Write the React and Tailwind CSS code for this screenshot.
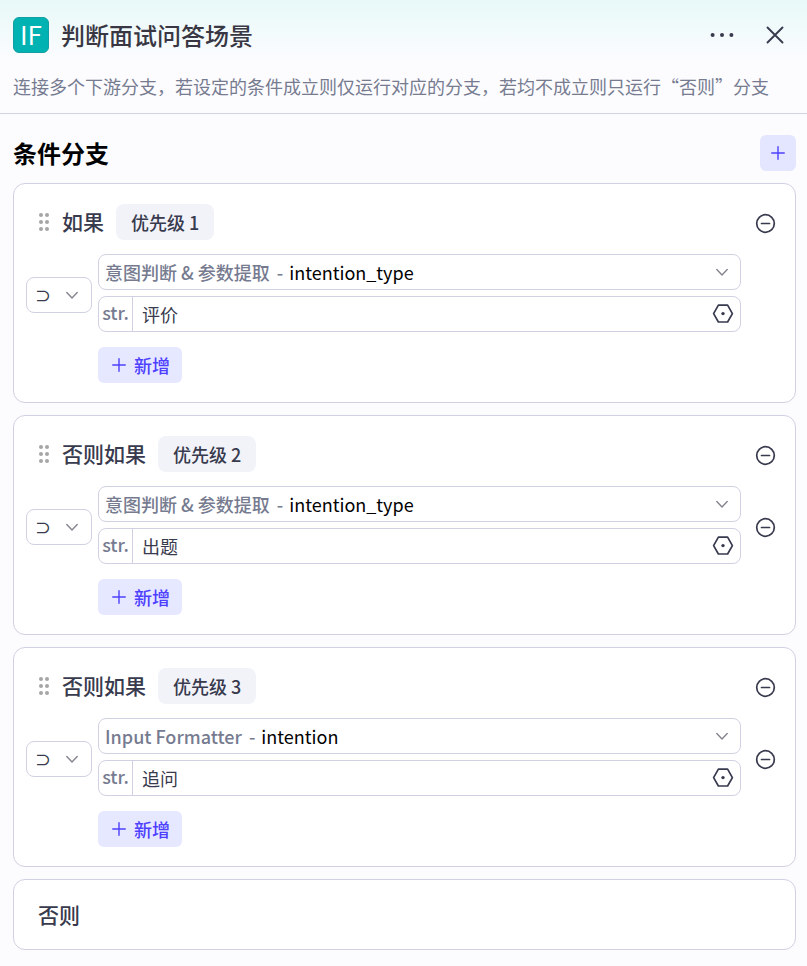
import { useState } from 'react';

const VARIABLES = {
  intent: { node: '意图判断 & 参数提取', name: 'intention_type' },
  formatter: { node: 'Input Formatter', name: 'intention' }
};

const INITIAL_BRANCHES = [
  { id: 1, title: '如果', variable: 'intent', value: '评价', removable: false },
  { id: 2, title: '否则如果', variable: 'intent', value: '出题', removable: true },
  { id: 3, title: '否则如果', variable: 'formatter', value: '追问', removable: true }
];

const PlusIcon = ({ className }) => (
  <svg className={className} viewBox="0 0 14 14" fill="none" stroke="currentColor" strokeWidth="1.4" strokeLinecap="round">
    <path d="M7 .75v12.5M.75 7h12.5" />
  </svg>
);

const ChevronIcon = () => (
  <svg className="pointer-events-none h-2 w-3 shrink-0 text-[#85858f]" viewBox="0 0 12 8" fill="none" stroke="currentColor" strokeWidth="1.4" strokeLinecap="round" strokeLinejoin="round">
    <path d="M.8 1.6 6 7l5.2-5.4" />
  </svg>
);

const DragIcon = () => (
  <svg className="h-[18px] w-[10px] shrink-0 text-[#a6a6a6]" viewBox="0 0 10 18" fill="currentColor">
    <circle cx="2" cy="2" r="2" />
    <circle cx="8" cy="2" r="2" />
    <circle cx="2" cy="9" r="2" />
    <circle cx="8" cy="9" r="2" />
    <circle cx="2" cy="16" r="2" />
    <circle cx="8" cy="16" r="2" />
  </svg>
);

const RemoveButton = ({ label, onClick }) => (
  <button type="button" aria-label={label} onClick={onClick} className="shrink-0 cursor-pointer text-[#383a4d]">
    <svg className="block h-[21px] w-[21px]" viewBox="0 0 21 21" fill="none" stroke="currentColor" strokeWidth="1.7" strokeLinecap="round">
      <circle cx="10.5" cy="10.5" r="8.8" />
      <path d="M6.5 10.5h8" />
    </svg>
  </button>
);

const ConditionRow = ({ branch, onChange, onRemove }) => {
  const variable = VARIABLES[branch.variable];

  return (
    <div className="flex items-center">
      {/* Operator */}
      <div className="relative mr-[6px] h-9 w-[66px] shrink-0 rounded-lg border border-[#d0d1e2] bg-white">
        <select
          aria-label="运算符"
          className="h-full w-full cursor-pointer appearance-none rounded-lg bg-transparent pl-2 text-[16px] font-medium text-[#383a4d] outline-none"
        >
          <option>⊃</option>
        </select>
        <span className="pointer-events-none absolute inset-y-0 right-[13px] flex items-center">
          <ChevronIcon />
        </span>
      </div>

      <div className="flex min-w-0 flex-1 flex-col gap-[6px] pb-1">
        {/* Variable reference */}
        <div className="flex h-9 items-center rounded-lg border border-[#d0d1e2] bg-white pl-[6px] pr-3 text-[18px]">
          <label
            htmlFor={`variable-${branch.id}`}
            className="flex shrink-0 gap-[7px] font-medium text-[#767b90]"
          >
            {variable.node}
            <span>-</span>
          </label>
          <select
            id={`variable-${branch.id}`}
            className="h-full min-w-0 flex-1 cursor-pointer appearance-none bg-transparent pl-[6px] text-black outline-none"
          >
            <option>{variable.name}</option>
          </select>
          <ChevronIcon />
        </div>

        {/* Compared value */}
        <div className="flex h-9 items-center rounded-lg border border-[#d0d1e2] bg-white pr-[6px]">
          <label
            htmlFor={`value-${branch.id}`}
            className="flex h-full w-[34px] shrink-0 items-center justify-center border-r border-[#d0d1e2] pb-1 text-[18px] leading-none font-medium text-[#767b90]"
          >
            str.
          </label>
          <input
            id={`value-${branch.id}`}
            type="text"
            value={branch.value}
            onChange={(e) => onChange(branch.id, e.target.value)}
            className="h-full min-w-0 flex-1 bg-transparent px-[9px] text-[18px] text-[#383a4d] outline-none"
          />
          <button type="button" aria-label="选择变量" className="shrink-0 cursor-pointer text-[#383a4d]">
            <svg className="block h-5 w-[22px]" viewBox="0 0 22 20" fill="none" stroke="currentColor" strokeWidth="1.7" strokeLinejoin="round">
              <path d="M6.4 1.2h9.2l4.8 8.4-4.8 8.4H6.4L1.6 9.6z" />
              <circle cx="11" cy="9.6" r="1.7" fill="currentColor" stroke="none" />
            </svg>
          </button>
        </div>
      </div>

      <div className="ml-[14px] flex w-[21px] shrink-0 justify-center">
        {branch.removable && <RemoveButton label="删除条件" onClick={() => onRemove(branch.id)} />}
      </div>
    </div>
  );
};

const BranchCard = ({ branch, priority, onChange, onRemove }) => (
  <section className="rounded-xl border border-[#d0d1e2] bg-white pt-5 pr-[19px] pb-[19px] pl-3">
    <div className="mb-[14px] flex h-9 items-center pl-[13px]">
      <DragIcon />
      <h3 className="ml-[13px] text-[21px] font-medium text-[#383a4d]">{branch.title}</h3>
      <span className="ml-3 flex h-9 items-center rounded-lg bg-[#f2f3f9] px-[15px] text-[18px] font-medium text-[#383a4d]">
        优先级 {priority}
      </span>
      <div className="ml-auto flex pt-[3px]">
        <RemoveButton label="删除分支" onClick={() => onRemove(branch.id)} />
      </div>
    </div>

    <ConditionRow branch={branch} onChange={onChange} onRemove={onRemove} />

    <button
      type="button"
      className="mt-[11px] ml-[72px] flex h-9 cursor-pointer items-center gap-2 rounded-md bg-[#e6e8ff] pr-3 pl-[14px] text-[18px] font-medium text-[#4d40ff]"
    >
      <PlusIcon className="h-[14px] w-[14px]" />
      新增
    </button>
  </section>
);

export default function App() {
  const [branches, setBranches] = useState(INITIAL_BRANCHES);

  const handleChange = (id, value) => {
    setBranches(branches.map((b) => (b.id === id ? { ...b, value } : b)));
  };

  const handleRemove = (id) => {
    setBranches(branches.filter((b) => b.id !== id));
  };

  const handleAdd = () => {
    setBranches([
      ...branches,
      { id: Date.now(), title: '否则如果', variable: 'intent', value: '', removable: true }
    ]);
  };

  return (
    <div className="min-h-screen bg-[#fcfcff] font-['Noto_Sans_CJK_SC',sans-serif]">
      <header className="border-b border-[#d0d1e2] bg-linear-to-b from-[#e8f9f8] to-[#fcfcff] to-[62px] pt-[17px] pr-[11px] pb-[15px] pl-[13px]">
        <div className="flex h-9 items-center">
          <div className="flex h-9 w-9 shrink-0 items-center justify-center rounded-md border border-[#129fa3] bg-[#00b2b2] pb-[2px] text-[26px] leading-none text-white">
            IF
          </div>
          <h1 className="ml-3 text-[24px] leading-9 font-medium text-[#383743]">判断面试问答场景</h1>
          <button type="button" aria-label="更多" className="ml-auto cursor-pointer text-[#383a4d]">
            <svg className="block h-6 w-6" viewBox="0 0 24 24" fill="currentColor">
              <circle cx="2.6" cy="12" r="2" />
              <circle cx="12" cy="12" r="2" />
              <circle cx="21.4" cy="12" r="2" />
            </svg>
          </button>
          <button type="button" aria-label="关闭" className="mr-[12px] ml-[32px] cursor-pointer text-[#383a4d]">
            <svg className="block h-[18px] w-[18px]" viewBox="0 0 18 18" fill="none" stroke="currentColor" strokeWidth="1.9" strokeLinecap="round">
              <path d="M1.5 1.5l15 15M16.5 1.5l-15 15" />
            </svg>
          </button>
        </div>
        <p className="mt-[21px] text-[18px] leading-6 text-[#767b90]">
          连接多个下游分支，若设定的条件成立则仅运行对应的分支，若均不成立则只运行“否则”分支
        </p>
      </header>

      <main className="pt-[21px] pr-[11px] pb-4 pl-[13px]">
        <div className="mb-3 flex h-9 items-center justify-between">
          <h2 className="text-[24px] leading-[34px] font-semibold text-black">条件分支</h2>
          <button
            type="button"
            aria-label="添加分支"
            onClick={handleAdd}
            className="flex h-9 w-9 cursor-pointer items-center justify-center rounded-md bg-[#e4e6ff] text-[#4d40ff]"
          >
            <PlusIcon className="h-[14px] w-[14px]" />
          </button>
        </div>

        <div className="flex flex-col gap-3">
          {branches.map((branch, i) => (
            <BranchCard
              key={branch.id}
              branch={branch}
              priority={i + 1}
              onChange={handleChange}
              onRemove={handleRemove}
            />
          ))}
          <section className="rounded-xl border border-[#d0d1e2] bg-white px-6 py-5">
            <h3 className="text-[21px] leading-[29px] font-medium text-[#383a4d]">否则</h3>
          </section>
        </div>
      </main>
    </div>
  );
}
